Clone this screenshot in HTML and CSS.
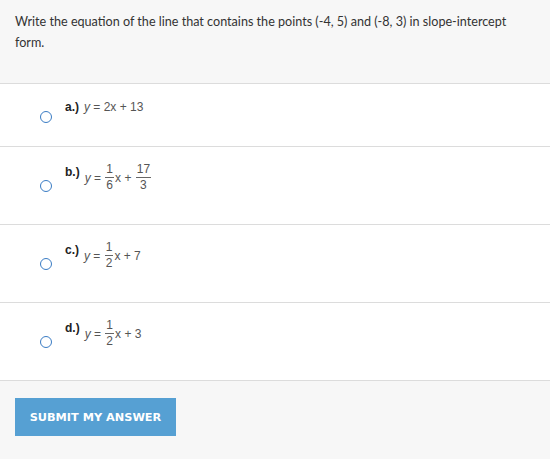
FILE: index.html
```html
<!DOCTYPE html>
<html>
<head>
<meta charset="utf-8">
<link rel="stylesheet" href="styles.css">
</head>
<body>
<div class="question">Write the equation of the line that contains the points (-4, 5) and (-8, 3) in slope-intercept form.</div>
<div class="choices">
  <div class="choice plain">
    <span class="radio"></span>
    <div class="answer"><span class="letter">a.)</span> <span class="math"><i>y</i> = 2x + 13</span></div>
  </div>
  <div class="choice">
    <span class="radio"></span>
    <div class="answer"><span class="letter">b.)</span> <span class="math"><i>y</i> = <span class="frac"><span class="num">1</span><span class="den">6</span></span>x + <span class="frac"><span class="num">17</span><span class="den">3</span></span></span></div>
  </div>
  <div class="choice">
    <span class="radio"></span>
    <div class="answer"><span class="letter">c.)</span> <span class="math"><i>y</i> = <span class="frac"><span class="num">1</span><span class="den">2</span></span>x + 7</span></div>
  </div>
  <div class="choice">
    <span class="radio"></span>
    <div class="answer"><span class="letter">d.)</span> <span class="math"><i>y</i> = <span class="frac"><span class="num">1</span><span class="den">2</span></span>x + 3</span></div>
  </div>
</div>
<div class="footer">
  <button class="submit">SUBMIT MY ANSWER</button>
</div>
</body>
</html>
```
FILE: styles.css
```css
html, body { margin: 0; padding: 0; background: #fff; }
body { font-family: "Liberation Sans", Arial, sans-serif; color: #333; width: 550px; }
.question {
  background: #f7f7f7;
  font-family: Lato, "Liberation Sans", sans-serif;
  font-size: 12.6px;
  line-height: 21px;
  padding: 11px 40px 30px 15px;
  height: 42px;
  border-bottom: 1px solid #dcdcdc;
}
.choice {
  display: flex;
  align-items: flex-start;
  padding: 14px 0 31px 40px;
  border-bottom: 1px solid #dcdcdc;
  height: 32px;
}
.choice.plain { height: 17px; }
.radio {
  width: 10px; height: 10px;
  border: 1.5px solid #3a7cc4;
  border-radius: 50%;
  margin-top: 19px;
  flex: none;
}
.choice.plain .radio { margin-top: 13px; }
.answer {
  margin-left: 13px;
  display: flex;
  align-items: center;
  font-size: 12px;
}
.choice.plain .answer { margin-top: 1px; }
.choice:not(.plain) .answer { align-items: flex-start; }
.letter { font-weight: bold; color: #222; font-size: 12px; line-height: 16px; margin-right: 5px; }
.choice:not(.plain) .letter { margin-top: 3px; }
.math { color: #555; font-size: 12px; display: inline-flex; align-items: center; white-space: pre; line-height: 16px; }
.choice:not(.plain) .math { margin-top: 2px; }
.math i { font-style: italic; }
.frac {
  display: inline-flex;
  flex-direction: column;
  align-items: center;
  margin: 0 1px;
  font-size: 12px;
  line-height: 13px;
}
.num { border-bottom: 1px solid #666; padding: 0 1px 1px; }
.den { padding-top: 1px; }
.footer {
  background: #f7f7f7;
  height: 79px;
  padding: 17px 15px 0;
  box-sizing: border-box;
}
.submit {
  background: #56a0d3;
  color: #fff;
  border: none;
  font-family: "DejaVu Sans", Verdana, sans-serif;
  font-weight: bold;
  font-size: 11.3px;
  width: 161px;
  height: 38px;
  padding: 0;
}
```
